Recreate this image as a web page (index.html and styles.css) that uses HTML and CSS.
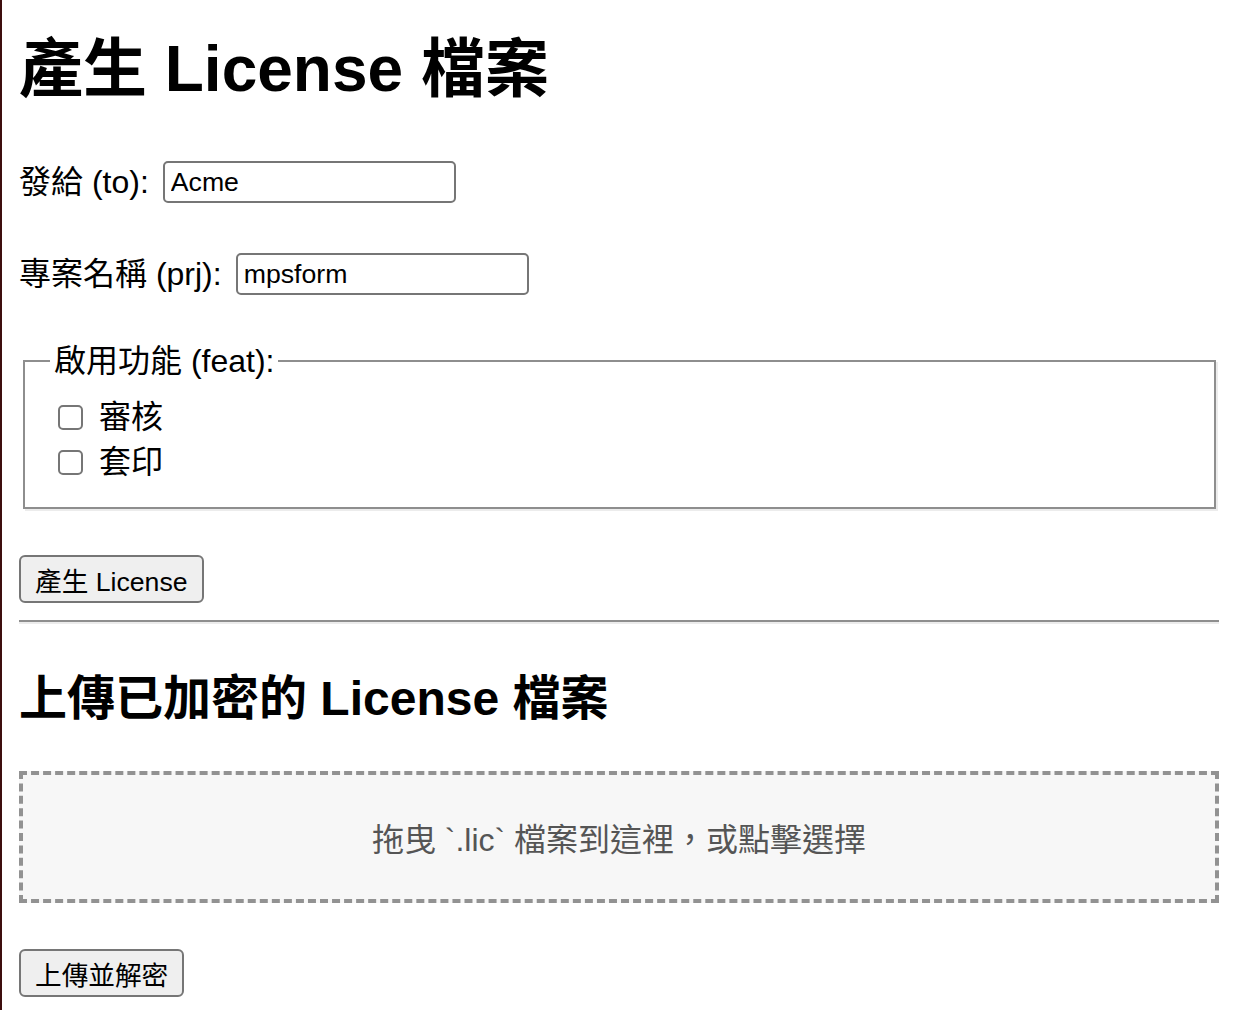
FILE: index.html
```html
<!DOCTYPE html>
<html lang="zh-Hant">
<head>
<meta charset="utf-8">
<title>License</title>
<link rel="stylesheet" href="styles.css">
</head>
<body>
<h1 class="title">產生 License 檔案</h1>
<form class="gen-form">
  <div class="row">
    <label class="row-label" for="to">發給 (to):</label>
    <input class="text-input" id="to" type="text" value="Acme">
  </div>
  <div class="row">
    <label class="row-label" for="prj">專案名稱 (prj):</label>
    <input class="text-input" id="prj" type="text" value="mpsform">
  </div>
  <fieldset class="features">
    <legend class="features-legend">啟用功能 (feat):</legend>
    <label class="check"><span class="box"></span><span class="check-text">審核</span></label>
    <label class="check"><span class="box"></span><span class="check-text">套印</span></label>
  </fieldset>
  <button class="btn" type="button">產生 License</button>
</form>
<div class="rule"></div>
<h2 class="subtitle">上傳已加密的 License 檔案</h2>
<div class="dropzone">拖曳 `.lic` 檔案到這裡，或點擊選擇</div>
<button class="btn btn-upload" type="button">上傳並解密</button>
</body>
</html>
```

FILE: styles.css
```css
html {
  box-sizing: border-box;
  min-height: 100vh;
  border-left: 2px solid #3d0e0e;
  background: #fff;
}
body {
  margin: 0 16px 0 17px;
  font-family: "Liberation Sans", "Noto Sans CJK TC", sans-serif;
  font-size: 32px;
  color: #000;
}
.title {
  font-size: 64px;
  font-weight: bold;
  line-height: 74px;
  margin: 0;
  padding-top: 32px;
  height: 74px;
}
.gen-form {
  display: flex;
  flex-direction: column;
  align-items: flex-start;
  margin-top: 55px;
}
.row {
  display: flex;
  align-items: center;
  gap: 14px;
  height: 42px;
  margin-bottom: 50px;
}
.row-label {
  line-height: 42px;
}
.text-input {
  box-sizing: border-box;
  width: 293px;
  height: 42px;
  border: 2px solid #767676;
  border-radius: 5px;
  padding: 0 6px;
  font-family: "Liberation Sans", "Noto Sans CJK TC", sans-serif;
  font-size: 26.67px;
  color: #000;
  background: #fff;
  margin: 0;
}
.features {
  box-sizing: border-box;
  align-self: stretch;
  margin: -4px 4px 0 4px;
  padding: 14px 24px 22px 34px;
  border: 2px solid #8e8e8e;
  box-shadow: 2px 2px 0 #ececec;
  display: flex;
  flex-direction: column;
  min-width: 0;
}
.features-legend {
  padding: 0 4px;
  margin-left: -9px;
  line-height: 40px;
}
.check {
  display: flex;
  align-items: center;
  gap: 16px;
  height: 45px;
  margin-left: -1px;
}
.box {
  box-sizing: border-box;
  width: 25px;
  height: 25px;
  border: 2px solid #767676;
  border-radius: 5px;
  background: #fff;
}
.check-text {
  line-height: 45px;
}
.btn {
  box-sizing: border-box;
  height: 48px;
  margin: 46px 0 0 0;
  padding: 0 14px;
  background: #efefef;
  border: 2px solid #767676;
  border-radius: 6px;
  font-family: "Liberation Sans", "Noto Sans CJK TC", sans-serif;
  font-size: 26.67px;
  color: #000;
}
.rule {
  height: 2px;
  background: #8e8e8e;
  border-bottom: 2px solid #ececec;
  margin-top: 17px;
  margin-right: 1px;
}
.subtitle {
  font-size: 48px;
  font-weight: bold;
  line-height: 56px;
  margin: 47px 0 0 0;
}
.dropzone {
  box-sizing: border-box;
  height: 132px;
  margin-top: 44px;
  margin-right: 1px;
  border: 4px dashed #929292;
  background: #f7f7f7;
  color: #555;
  display: flex;
  align-items: center;
  justify-content: center;
  font-size: 32px;
}
.btn-upload {
  margin-top: 46px;
}
```
